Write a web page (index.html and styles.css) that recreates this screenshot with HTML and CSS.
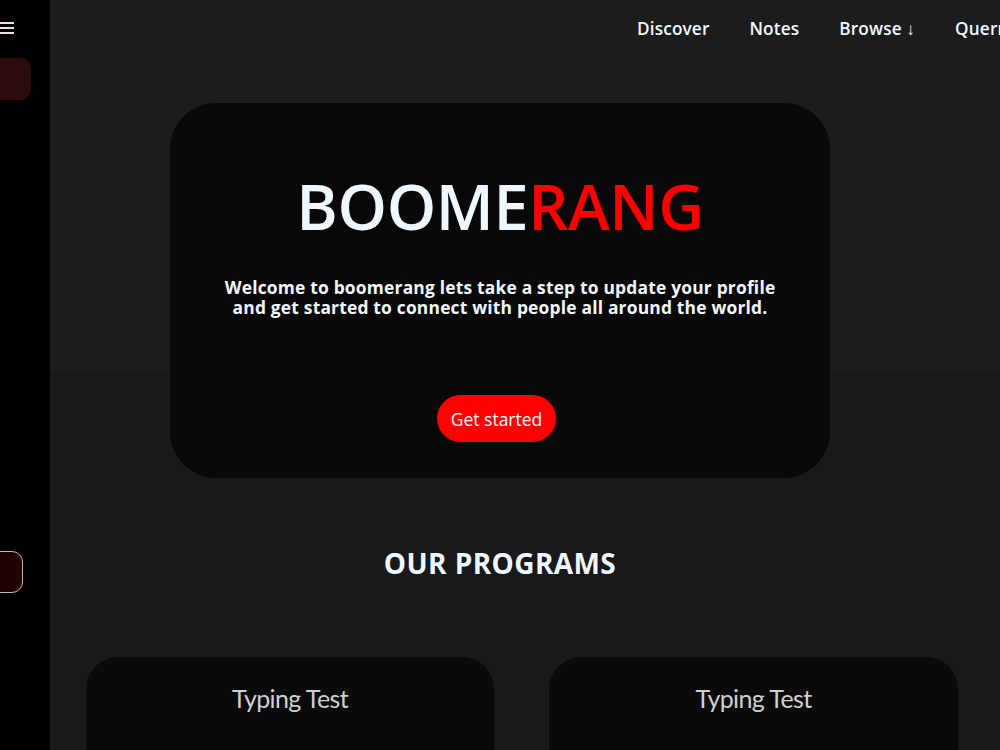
FILE: index.html
```html
<!DOCTYPE html>
<html lang="en">
<head>
    <meta charset="UTF-8" />
    <meta name="viewport" content="width=device-width, initial-scale=1.0" />
    <title>Boomerang</title>
    <link rel="stylesheet" href="styles.css">
</head>
<body>
    <aside class="sidebar">
        <button class="menu-btn" aria-label="menu">
            <span></span><span></span><span></span>
        </button>
        <div class="side-item active"></div>
        <div class="side-spacer"></div>
        <div class="side-item outlined"></div>
    </aside>

    <div class="page">
        <nav class="topnav">
            <a href="#">Discover</a>
            <a href="#">Notes</a>
            <a href="#">Browse &darr;</a>
            <a href="#">Querries</a>
        </nav>

        <section class="hero">
            <h1 class="logo">BOOME<span class="accent">RANG</span></h1>
            <p class="intro">Welcome to boomerang lets take a step to update your profile and get started to connect with people all around the world.</p>
            <button class="cta">Get started</button>
        </section>

        <h2 class="section-title">OUR PROGRAMS</h2>

        <div class="programs">
            <div class="program-card">
                <h3>Typing Test</h3>
            </div>
            <div class="program-card">
                <h3>Typing Test</h3>
            </div>
        </div>
    </div>
</body>
</html>
```

FILE: styles.css
```css
* {
    box-sizing: border-box;
}
html, body {
    height: 100%;
}
body {
    margin: 0;
    overflow: hidden;
    font-family: "Open Sans", "Noto Sans", sans-serif;
    color: aliceblue;
    background: linear-gradient(#1c1c1c 373px, #191919 373px);
}

/* side menu, slid partly off the left edge */
.sidebar {
    position: fixed;
    top: 0;
    left: 0;
    bottom: 0;
    width: 50px;
    background: #000;
    display: flex;
    flex-direction: column;
    z-index: 10;
}
.menu-btn {
    display: flex;
    flex-direction: column;
    gap: 3px;
    width: 14px;
    margin: 22px 0 0 0;
    padding: 0;
    background: none;
    border: none;
}
.menu-btn span {
    display: block;
    height: 2px;
    width: 14px;
    background: #ece4d6;
}
.side-item {
    width: 60px;
    margin-left: -29px;
    border-radius: 11px;
}
.side-item.active {
    height: 42px;
    margin-top: 24px;
    background: #2b0b0b;
}
.side-spacer {
    height: 451px;
}
.side-item.outlined {
    height: 42px;
    margin-left: -37px;
    background: #1f0406;
    border: 1px solid #bdb6b0;
}

.page {
    display: flex;
    flex-direction: column;
    align-items: center;
}

.topnav {
    align-self: stretch;
    display: flex;
    gap: 40px;
    height: 57px;
    align-items: center;
    padding-left: 637px;
    white-space: nowrap;
    overflow: hidden;
}
.topnav a {
    color: aliceblue;
    text-decoration: none;
    font-size: 17.2px;
    font-weight: 600;
    letter-spacing: 0.15px;
}

.hero {
    width: 660px;
    height: 375px;
    margin-top: 46px;
    background: #0a0707;
    border-radius: 46px;
    display: flex;
    flex-direction: column;
    align-items: center;
    text-align: center;
}
.logo {
    margin: 66px 0 0;
    font-size: 63px;
    font-weight: 600;
    line-height: 74px;
    letter-spacing: -0.4px;
    color: aliceblue;
}
.logo .accent {
    color: #ff0000;
}
.intro {
    width: 565px;
    margin: 34px 0 0;
    font-size: 17.4px;
    font-weight: 700;
    line-height: 20px;
    letter-spacing: 0.2px;
}
.cta {
    margin-top: 78px;
    margin-right: 7px;
    padding: 0 14px;
    height: 47px;
    border: none;
    border-radius: 24px;
    background: #ff0000;
    color: #fff;
    font-family: inherit;
    font-size: 17.5px;
    cursor: pointer;
}

.section-title {
    margin: 68px 0 0;
    font-size: 28px;
    font-weight: 700;
    line-height: 34px;
    letter-spacing: 0.4px;
    color: aliceblue;
}

.programs {
    align-self: stretch;
    display: grid;
    grid-template-columns: 408px 409px;
    gap: 55px;
    padding-left: 86px;
    margin-top: 77px;
}
.program-card {
    height: 200px;
    background: #0a0a0a;
    border-radius: 32px;
    text-align: center;
}
.program-card h3 {
    margin: 26px 0 0;
    font-family: Lato, "Open Sans", sans-serif;
    font-size: 25px;
    font-weight: 400;
    letter-spacing: -0.6px;
    color: #cfcfcf;
}
```
